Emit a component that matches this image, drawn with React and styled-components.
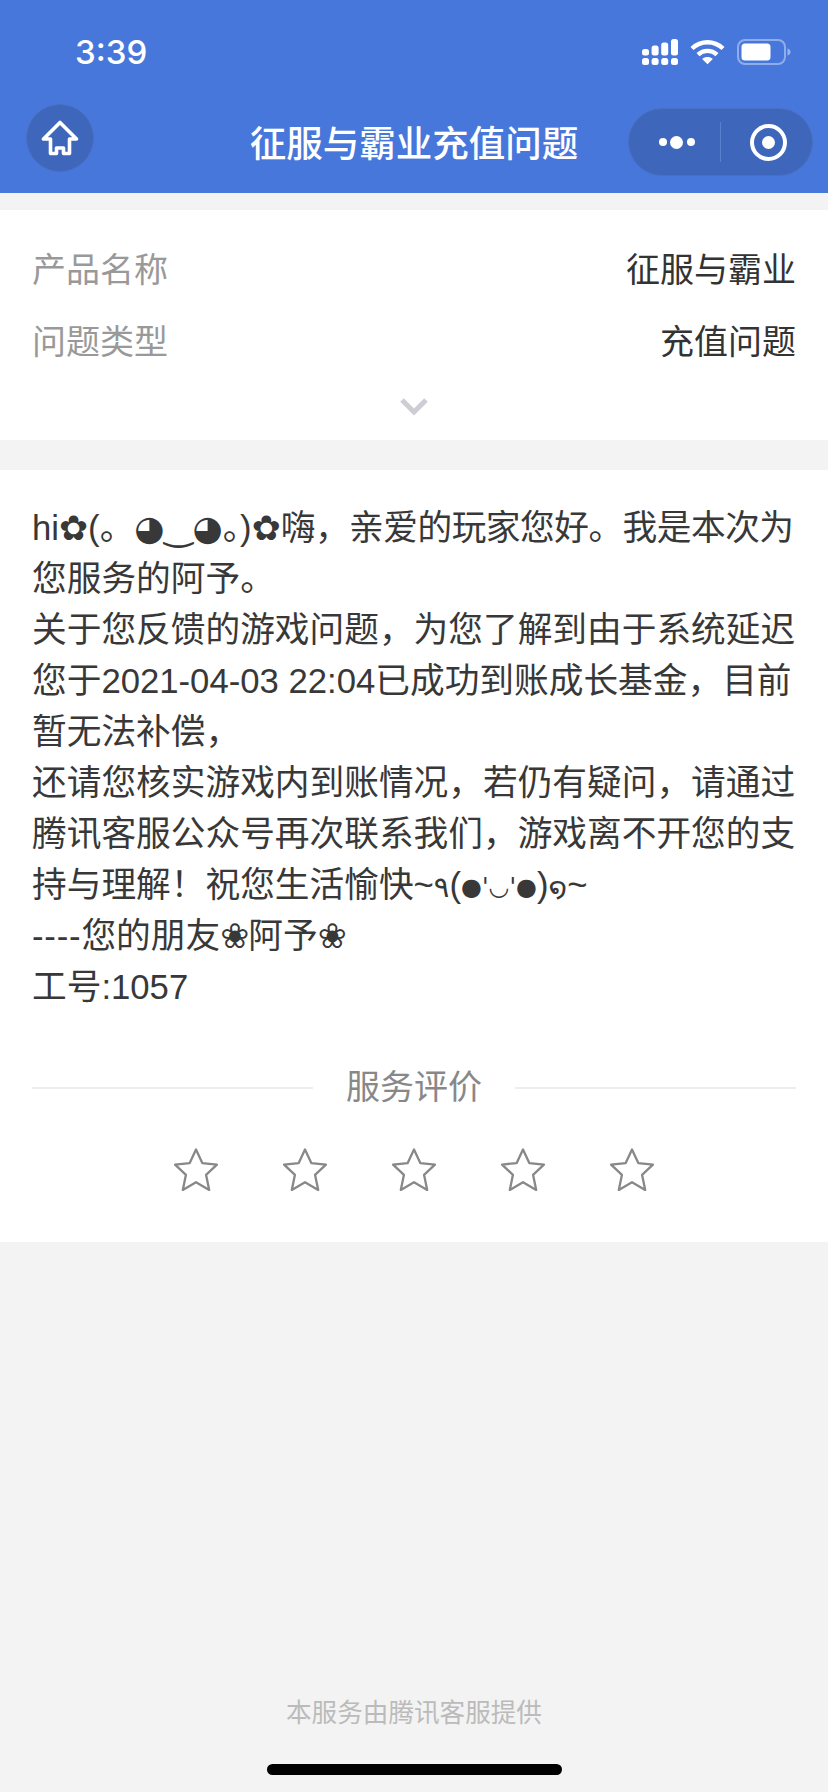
import React from 'react'
import styled, { createGlobalStyle } from 'styled-components'

const GlobalStyle = createGlobalStyle`
  html, body {
    margin: 0;
    padding: 0;
    background: #f3f3f3;
  }
  * {
    box-sizing: border-box;
  }
`

const FONT = `"Liberation Sans", "Noto Sans CJK SC", "DejaVu Sans", sans-serif`

const STARS = [1, 2, 3, 4, 5]

function SignalIcon() {
  return (
    <svg width="36" height="26" viewBox="0 0 36 26" fill="#fff">
      <rect x="0" y="10" width="7" height="6.5" rx="2.5" />
      <rect x="9.6" y="6.5" width="7" height="10" rx="2.5" />
      <rect x="19.2" y="3.5" width="7" height="13" rx="2.5" />
      <rect x="29" y="0" width="7" height="16.5" rx="2.5" />
      <rect x="0" y="19" width="7" height="7" rx="2.5" />
      <rect x="9.6" y="19" width="7" height="7" rx="2.5" />
      <rect x="19.2" y="19" width="7" height="7" rx="2.5" />
      <rect x="29" y="19" width="7" height="7" rx="2.5" />
    </svg>
  )
}

function WifiIcon() {
  return (
    <svg width="35" height="26" viewBox="0 0 35 26" fill="none" stroke="#fff" strokeWidth="4.4">
      <path d="M2 9.5C10.8 1.2 24.2 1.2 33 9.5" />
      <path d="M8 15.6C13.5 10.6 21.5 10.6 27 15.6" />
      <path d="M12.2 20L17.5 25.2L22.8 20C19.6 17.4 15.4 17.4 12.2 20Z" fill="#fff" stroke="none" />
    </svg>
  )
}

function BatteryIcon() {
  return (
    <svg width="54" height="26" viewBox="0 0 54 26" fill="none">
      <rect x="1" y="1" width="47" height="24" rx="7" stroke="#fff" strokeOpacity="0.4" strokeWidth="2" />
      <rect x="4.5" y="4.5" width="29" height="17" rx="3.5" fill="#fff" />
      <path d="M50.5 9.5C52.5 10 53.5 11.4 53.5 13C53.5 14.6 52.5 16 50.5 16.5Z" fill="#fff" fillOpacity="0.45" />
    </svg>
  )
}

function HomeIcon() {
  return (
    <svg width="38" height="36" viewBox="0 0 38 36" fill="none" stroke="#fff" strokeWidth="3.6" strokeLinejoin="round" strokeLinecap="round">
      <path d="M19 2.5L2.5 19H9.5V33.5H15.5V28H22.5V33.5H28.5V19H35.5Z" />
    </svg>
  )
}

function StarIcon() {
  return (
    <svg width="44" height="44" viewBox="0 0 42 42" fill="none" stroke="#888" strokeWidth="2.2" strokeLinejoin="round">
      <path d="M21 1.5L27 14.4L41 15.8L30.6 25.6L33.6 40L21 32.6L8.4 40L11.4 25.6L1 15.8L15 14.4Z" />
    </svg>
  )
}

function Chevron() {
  return (
    <svg width="28" height="18" viewBox="0 0 28 18" fill="none" stroke="#cdcdd4" strokeWidth="5">
      <path d="M2 2L14 14L26 2" />
    </svg>
  )
}

export default function App() {
  return (
    <Page>
      <GlobalStyle />
      <Header>
        <StatusBar>
          <Time>3:39</Time>
          <StatusIcons>
            <SignalIcon />
            <WifiIcon />
            <BatteryIcon />
          </StatusIcons>
        </StatusBar>
        <NavBar>
          <HomeButton>
            <HomeIcon />
          </HomeButton>
          <Title>征服与霸业充值问题</Title>
          <Capsule>
            <CapsuleSide>
              <Dot $size={8} />
              <Dot $size={13} />
              <Dot $size={8} />
            </CapsuleSide>
            <CapsuleDivider />
            <CapsuleSide>
              <Ring />
            </CapsuleSide>
          </Capsule>
        </NavBar>
      </Header>

      <InfoCard>
        <InfoRow>
          <InfoLabel>产品名称</InfoLabel>
          <InfoValue>征服与霸业</InfoValue>
        </InfoRow>
        <InfoRow>
          <InfoLabel>问题类型</InfoLabel>
          <InfoValue>充值问题</InfoValue>
        </InfoRow>
        <Expand>
          <Chevron />
        </Expand>
      </InfoCard>

      <AnswerCard>
        <AnswerText>
          hi<Symbol>✿</Symbol>(<Symbol>。◕‿◕。</Symbol>)<Symbol>✿</Symbol><Tight>嗨，亲爱的玩家您好。我是本次为</Tight>您服务的阿予。
          <br />
          关于您反馈的游戏问题，为您了解到由于系统延迟您于2021-04-03 22:04已成功到账成长基金，目前暂无法补偿，
          <br />
          还请您核实游戏内到账情况，若仍有疑问，请通过腾讯客服公众号再次联系我们，游戏离不开您的支持与理解！祝您生活愉快~<Digit>٩</Digit>(<Face>●'◡'●</Face>)<Digit>໑</Digit>~
          <br />
          <Dashes>----</Dashes>您的朋友<Flower>❀</Flower>阿予<Flower>❀</Flower>
          <br />
          工号:1057
        </AnswerText>
        <RatingHead>
          <RatingLine />
          <RatingTitle>服务评价</RatingTitle>
          <RatingLine />
        </RatingHead>
        <Stars>
          {STARS.map((n) => (
            <StarIcon key={n} />
          ))}
        </Stars>
      </AnswerCard>

      <Footer>本服务由腾讯客服提供</Footer>
      <HomeIndicator />
    </Page>
  )
}

const Page = styled.div`
  position: relative;
  display: flex;
  flex-direction: column;
  width: 828px;
  height: 1792px;
  overflow: hidden;
  background: #f3f3f3;
  font-family: ${FONT};
`

const Header = styled.header`
  height: 193px;
  background: #4877db;
  color: #fff;
`

const StatusBar = styled.div`
  display: flex;
  align-items: center;
  justify-content: space-between;
  height: 104px;
  padding: 0 37px 0 75px;
`

const Time = styled.span`
  font-family: Inter, "Liberation Sans", sans-serif;
  font-size: 33px;
  font-weight: 500;
  line-height: 1;
`

const StatusIcons = styled.div`
  display: flex;
  align-items: center;
  gap: 12px;
`

const NavBar = styled.div`
  position: relative;
  display: flex;
  justify-content: space-between;
  padding: 0 15px 0 26px;
`

const HomeButton = styled.div`
  display: flex;
  align-items: center;
  justify-content: center;
  width: 68px;
  height: 68px;
  border-radius: 50%;
  background: #3e66ba;
  border: 1px solid #4a70c4;
`

const Title = styled.div`
  position: absolute;
  left: 0;
  right: 0;
  top: 15px;
  text-align: center;
  font-size: 36.5px;
  font-weight: 500;
  line-height: 52px;
`

const Capsule = styled.div`
  display: flex;
  align-items: center;
  width: 185px;
  height: 68px;
  margin-top: 4px;
  border-radius: 34px;
  background: #3e66ba;
  border: 1px solid #4a70c4;
`

const CapsuleSide = styled.div`
  display: flex;
  flex: 1;
  align-items: center;
  justify-content: center;
  gap: 3.5px;
  padding-left: 4px;
`

const Dot = styled.span`
  width: ${(p) => p.$size}px;
  height: ${(p) => p.$size}px;
  border-radius: 50%;
  background: #fff;
`

const CapsuleDivider = styled.div`
  width: 1px;
  height: 40px;
  background: #5a7fcd;
`

const Ring = styled.span`
  display: flex;
  align-items: center;
  justify-content: center;
  width: 37px;
  height: 37px;
  border: 4px solid #fff;
  border-radius: 50%;

  &::after {
    content: '';
    width: 13px;
    height: 13px;
    border-radius: 50%;
    background: #fff;
  }
`

const InfoCard = styled.section`
  height: 230px;
  margin-top: 17px;
  padding: 21px 32px 0;
  background: #fff;
`

const InfoRow = styled.div`
  display: flex;
  align-items: center;
  justify-content: space-between;
  height: 72px;
`

const InfoLabel = styled.span`
  font-size: 34px;
  color: #999;
`

const InfoValue = styled.span`
  font-size: 34px;
  color: #333;
`

const Expand = styled.div`
  display: flex;
  justify-content: center;
  padding-top: 23px;
`

const AnswerCard = styled.section`
  height: 772px;
  margin-top: 30px;
  padding: 33px 32px 0;
  background: #fff;
`

const AnswerText = styled.div`
  font-size: 34.7px;
  line-height: 51px;
  color: #383838;
`

const Symbol = styled.span`
  font-family: "DejaVu Sans", "Noto Sans CJK SC", sans-serif;
  line-height: 1;
`

const Tight = styled.span`
  letter-spacing: -0.5px;
`

const Digit = styled.span`
  font-family: "DejaVu Sans", "Noto Sans CJK SC", sans-serif;
  font-size: 29px;
  line-height: 1;
`

const Face = styled.span`
  font-family: "DejaVu Sans", "Noto Sans CJK SC", sans-serif;
  font-size: 24px;
  line-height: 1;
  vertical-align: 2px;
`

const Dashes = styled.span`
  letter-spacing: 0.8px;
`

const Flower = styled.span`
  font-family: "DejaVu Sans", "Noto Sans CJK SC", sans-serif;
  line-height: 1;
  letter-spacing: -1px;
`

const RatingHead = styled.div`
  display: flex;
  align-items: center;
  gap: 33px;
  margin-top: 49px;
`

const RatingLine = styled.div`
  flex: 1;
  height: 2px;
  background: #eee;
`

const RatingTitle = styled.div`
  font-size: 34px;
  line-height: 51px;
  color: #888;
`

const Stars = styled.div`
  display: flex;
  justify-content: center;
  gap: 65px;
  margin-top: 35px;
`

const Footer = styled.footer`
  margin-top: auto;
  padding-bottom: 59px;
  text-align: center;
  font-size: 25.6px;
  line-height: 40px;
  color: #bbb;
`

const HomeIndicator = styled.div`
  position: absolute;
  left: 267px;
  bottom: 17px;
  width: 295px;
  height: 11px;
  border-radius: 6px;
  background: #000;
`
